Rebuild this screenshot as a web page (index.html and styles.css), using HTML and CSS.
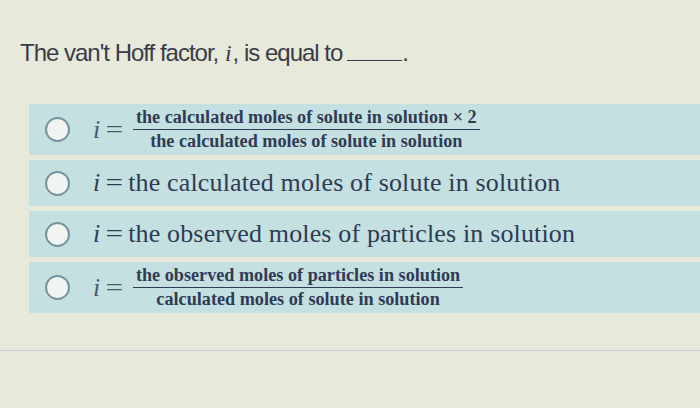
FILE: index.html
```html
<!DOCTYPE html>
<html>
<head>
<meta charset="utf-8">
<link rel="stylesheet" href="styles.css">
</head>
<body>
<div class="page">
  <p class="question">The van't Hoff factor, <span class="qi">i</span>, is equal to<span class="blank"></span>.</p>
  <div class="options">
    <div class="option tall">
      <span class="radio"></span>
      <span class="math small-eq"><span class="var">i</span><span class="eq">=</span>
        <span class="frac">
          <span class="num">the calculated moles of solute in solution × 2</span>
          <span class="den">the calculated moles of solute in solution</span>
        </span>
      </span>
    </div>
    <div class="option">
      <span class="radio"></span>
      <span class="math big"><span class="var">i</span><span class="eq">=</span><span>the calculated moles of solute in solution</span></span>
    </div>
    <div class="option">
      <span class="radio"></span>
      <span class="math big"><span class="var">i</span><span class="eq">=</span><span>the observed moles of particles in solution</span></span>
    </div>
    <div class="option tall">
      <span class="radio"></span>
      <span class="math small-eq"><span class="var">i</span><span class="eq">=</span>
        <span class="frac">
          <span class="num">the observed moles of particles in solution</span>
          <span class="den">calculated moles of solute in solution</span>
        </span>
      </span>
    </div>
  </div>
  <div class="rule"></div>
</div>
</body>
</html>
```
FILE: styles.css
```css
html, body {
  margin: 0;
  padding: 0;
}
body {
  width: 700px;
  height: 408px;
  overflow: hidden;
  background: #e7e9da;
}
.page {
  padding: 38px 0 0 0;
}
.question {
  margin: 0 0 0 20px;
  font-family: "Liberation Sans", sans-serif;
  font-size: 24px;
  letter-spacing: -1px;
  line-height: 30px;
  color: #3a3c48;
}
.qi {
  font-family: "Liberation Serif", serif;
  font-style: italic;
  letter-spacing: 0;
  margin: 0 1px;
}
.blank {
  display: inline-block;
  width: 55px;
  height: 1px;
  border-bottom: 1.5px solid #3a3c48;
  vertical-align: baseline;
  margin-left: 5px;
}
.options {
  margin: 36px 0 0 29px;
  display: flex;
  flex-direction: column;
  gap: 5px;
}
.option {
  display: flex;
  align-items: center;
  height: 46px;
  padding-left: 16px;
  background: #c5e0e0;
}
.option.tall {
  height: 51px;
}
.radio {
  width: 21px;
  height: 21px;
  border-radius: 50%;
  border: 2px solid #7793a0;
  background: #f1f4f0;
  flex: none;
}
.math {
  display: flex;
  align-items: center;
  margin-left: 23px;
  font-family: "Liberation Serif", serif;
  color: #2f3a55;
  white-space: nowrap;
}
.math.big {
  font-size: 26px;
  letter-spacing: 0.15px;
}
.math.small-eq {
  font-size: 26px;
  color: #4a5670;
}
.var {
  font-style: italic;
}
.eq {
  margin: 0 6px 0 7px;
  transform: scaleX(1.2);
}
.frac {
  display: inline-flex;
  flex-direction: column;
  align-items: center;
  margin-left: 5px;
  font-size: 18.2px;
  font-weight: bold;
  color: #303b56;
  line-height: 21px;
  letter-spacing: 0;
}
.num {
  padding: 0 3px 1px;
  border-bottom: 1.5px solid #303b56;
}
.den {
  padding-top: 1px;
}
.rule {
  margin-top: 37px;
  height: 1px;
  background: #c3ccd0;
}
```
